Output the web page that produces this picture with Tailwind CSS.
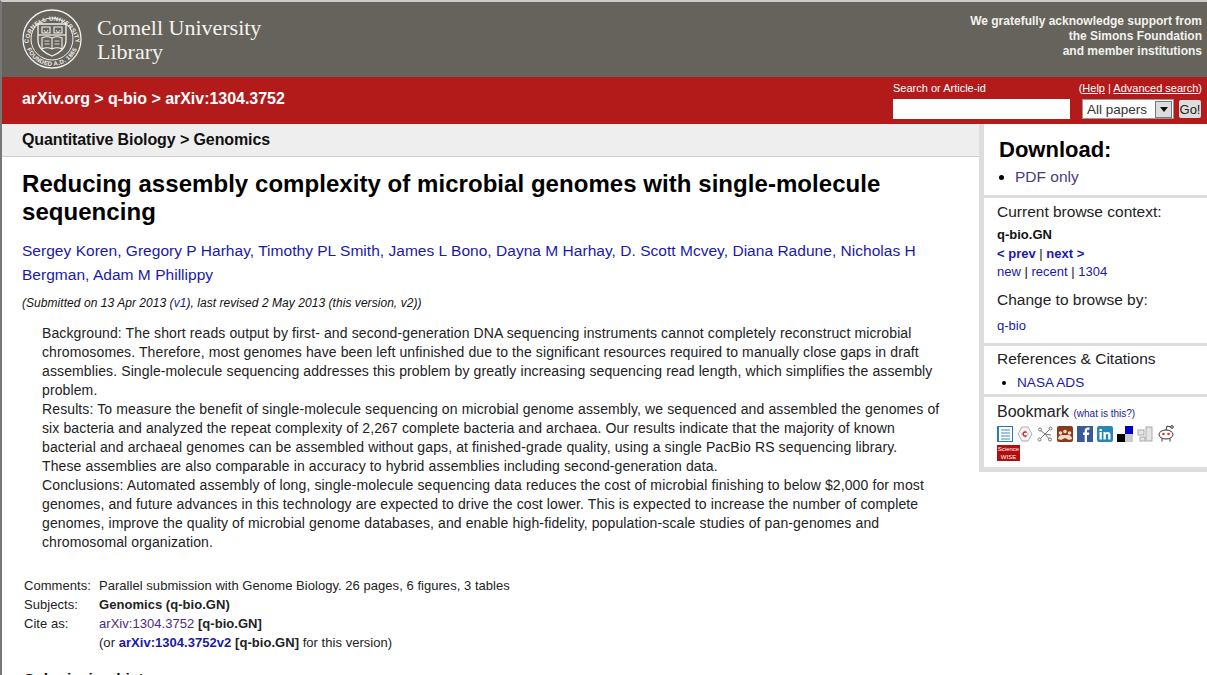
<!DOCTYPE html>
<html>
<head>
<meta charset="utf-8">
<script src="https://cdn.jsdelivr.net/npm/@tailwindcss/browser@4"></script>
</head>
<body class="bg-white overflow-hidden font-['Liberation_Sans',Arial,sans-serif] text-[#111]">
<div class="w-[1207px] h-[675px] overflow-hidden border-l-2 border-l-[#777] border-t-2 border-t-[#ccc] flex flex-col">
  <header class="h-[75px] shrink-0 bg-[#66635c] flex justify-between">
    <div class="flex items-start pl-[20px] pt-[7px] gap-[15px]">
      <svg class="w-[60px] h-[60px]" viewBox="0 0 60 60" fill="none" stroke="#f2f1ec">
        <defs>
          <path id="seal-top" d="M6.500 33A23.600 23.600 0 0 1 53.500 33"/>
          <path id="seal-bot" d="M3.200 33A27 27 0 0 0 56.800 33"/>
        </defs>
        <circle cx="30" cy="30" r="29" stroke-width="1.300"/>
        <circle cx="30" cy="30" r="21" stroke-width="1"/>
        <text font-family="Liberation Sans, sans-serif" font-size="6" font-weight="700" fill="#f2f1ec" stroke="none" letter-spacing="0.3"><textPath href="#seal-top" startOffset="50%" text-anchor="middle">CORNELL UNIVERSITY</textPath></text>
        <text font-family="Liberation Sans, sans-serif" font-size="6" font-weight="700" fill="#f2f1ec" stroke="none" letter-spacing="0.3"><textPath href="#seal-bot" startOffset="50%" text-anchor="middle">FOUNDED A.D. 1865</textPath></text>
        <path d="M16 15h28v16c0 9-7 13-14 16c-7-3-14-7-14-16z" stroke-width="1.300"/>
        <path d="M16 26h28" stroke-width="1.200"/>
        <path d="M20 18h8v6h-8zM32 18h8v6h-8z" stroke-width="1.100"/>
        <path d="M22 21l2 3 2-3M34 21l2 3 2-3" stroke-width=".9"/>
        <path d="M20 29c3-1.500 7-1.500 10 0c3-1.500 7-1.500 10 0v11c-3-1.500-7-1.500-10 0c-3-1.500-7-1.500-10 0zM30 29v11" stroke-width="1.100"/>
        <path d="M22.500 32h5M22.500 35h5M32.500 32h5M32.500 35h5" stroke-width=".8"/>
      </svg>
      <div class="font-['Liberation_Serif',serif] text-[#f4f3ee] text-[22px] leading-[24px] pt-[7px]">Cornell University<br>Library</div>
    </div>
    <div class="text-right text-[12px] font-bold leading-[15px] text-[#f2f2ee] pr-[5px] pt-[12px]">We gratefully acknowledge support from<br>the Simons Foundation<br>and member institutions</div>
  </header>
  <div class="h-[47px] shrink-0 bg-[#b31b1b] flex justify-between text-white">
    <div class="pl-[20px] pt-[13px] text-[16px] leading-[18px] font-bold tracking-[-0.03px]">arXiv.org &gt; q-bio &gt; arXiv:1304.3752</div>
    <div class="w-[314px] pr-[5px] pt-[5px] text-[11px] leading-[13px]">
      <div class="flex justify-between"><span>Search or Article-id</span><span>(<u>Help</u> | <u>Advanced search</u>)</span></div>
      <div class="flex items-center mt-[4px]">
        <div class="w-[177px] h-[20px] bg-white"></div>
        <div class="ml-[12px] w-[92px] h-[20px] bg-white border border-[#999] flex items-center justify-between text-[#333] text-[13.500px] pl-[4px] pr-[1px]">All papers
          <span class="w-[17px] h-[17px] bg-[#ddd] border border-[#777] flex items-center justify-center"><svg class="w-[8px] h-[5px]" viewBox="0 0 8 5"><path d="M0 0h8L4 5z" fill="#111"/></svg></span>
        </div>
        <div class="ml-[5px] w-[22px] h-[18px] bg-[#ddd] rounded-[2px] text-[#222] text-[13px] flex items-center justify-center">Go!</div>
      </div>
    </div>
  </div>
  <div class="flex flex-1 min-h-0">
    <main class="flex-1 min-w-0">
      <div class="h-[33px] bg-[#eeeeee] border-b border-[#ccc] pl-[20px] pt-[7px] text-[16px] leading-[18px] font-bold tracking-[-0.1px]">Quantitative Biology &gt; Genomics</div>
      <h1 class="pl-[20px] pr-[40px] pt-[13px] text-[24px] leading-[28px] font-bold tracking-[0.05px] text-black">Reducing assembly complexity of microbial genomes with single-molecule sequencing</h1>
      <div class="pl-[20px] pr-[40px] mt-[13px] text-[15.500px] leading-[24px] text-[#1a1aaa] tracking-[0.03px]">Sergey Koren, Gregory P Harhay, Timothy PL Smith, James L Bono, Dayna M Harhay, D. Scott Mcvey, Diana Radune, Nicholas H Bergman, Adam M Phillippy</div>
      <div class="pl-[20px] mt-[8px] text-[12px] leading-[16px] italic tracking-[0.05px]">(Submitted on 13 Apr 2013 (<span class="text-[#1a1aaa]">v1</span>), last revised 2 May 2013 (this version, v2))</div>
      <div class="pl-[40px] pr-[35px] mt-[13px] text-[14px] leading-[19px] text-[#222] tracking-[0.115px]">
        <div>Background: The short reads output by first- and second-generation DNA sequencing instruments cannot completely reconstruct microbial chromosomes. Therefore, most genomes have been left unfinished due to the significant resources required to manually close gaps in draft assemblies. Single-molecule sequencing addresses this problem by greatly increasing sequencing read length, which simplifies the assembly problem.</div>
        <div>Results: To measure the benefit of single-molecule sequencing on microbial genome assembly, we sequenced and assembled the genomes of six bacteria and analyzed the repeat complexity of 2,267 complete bacteria and archaea. Our results indicate that the majority of known bacterial and archaeal genomes can be assembled without gaps, at finished-grade quality, using a single PacBio RS sequencing library.<br>These assemblies are also comparable in accuracy to hybrid assemblies including second-generation data.</div>
        <div>Conclusions: Automated assembly of long, single-molecule sequencing data reduces the cost of microbial finishing to below $2,000 for most genomes, and future advances in this technology are expected to drive the cost lower. This is expected to increase the number of complete genomes, improve the quality of microbial genome databases, and enable high-fidelity, population-scale studies of pan-genomes and chromosomal organization.</div>
      </div>
      <div class="pl-[22px] mt-[24px] grid grid-cols-[75px_1fr] text-[13px] leading-[19px] text-[#222] tracking-[0.04px]">
        <div>Comments:</div><div>Parallel submission with Genome Biology. 26 pages, 6 figures, 3 tables</div>
        <div>Subjects:</div><div class="font-bold">Genomics (q-bio.GN)</div>
        <div>Cite as:</div><div><span class="text-[#4b2c83]">arXiv:1304.3752</span> <b>[q-bio.GN]</b></div>
        <div></div><div>(or <b class="text-[#1a1aaa]">arXiv:1304.3752v2</b> <b>[q-bio.GN]</b> for this version)</div>
      </div>
      <div class="pl-[22px] mt-[18px] text-[15.500px] leading-[18px] font-bold">Submission history</div>
    </main>
    <aside class="w-[228px] shrink-0 self-start bg-[#dddddd] pl-[5px] pb-[5px]">
      <div class="bg-white h-[71px] pl-[15px] pt-[13px]">
        <div class="text-[22px] leading-[26px] font-bold text-black">Download:</div>
        <ul class="mt-[4px] text-[15.500px] leading-[20px] text-[#4b3b7c]"><li class="list-disc ml-[16px] marker:text-black">PDF only</li></ul>
      </div>
      <div class="bg-white mt-[3px] h-[145px] pl-[13px] pt-[5px] text-[13px] leading-[18px]">
        <div class="text-[15.500px] text-[#222]">Current browse context:</div>
        <div class="mt-[5px] font-bold">q-bio.GN</div>
        <div class="mt-[1px] font-bold text-[#1a1aaa]">&lt; prev <span class="text-[#111] font-normal">|</span> next &gt;</div>
        <div class="text-[#1a1aaa]">new <span class="text-[#111]">|</span> recent <span class="text-[#111]">|</span> 1304</div>
        <div class="mt-[10px] text-[15.500px] text-[#222]">Change to browse by:</div>
        <div class="mt-[8px] text-[#1a1aaa]">q-bio</div>
      </div>
      <div class="bg-white mt-[3px] h-[48px] pl-[13px] pt-[4px]">
        <div class="text-[15.500px] leading-[18px] text-[#222]">References &amp; Citations</div>
        <ul class="mt-[7px] text-[13.600px] leading-[16px] text-[#1a1aaa]"><li class="list-disc ml-[20px] marker:text-black">NASA ADS</li></ul>
      </div>
      <div class="bg-white mt-[3px] h-[70px] pl-[13px] pt-[6px]">
        <div class="text-[16px] leading-[18px] text-[#222]">Bookmark <span class="text-[10px] text-[#1a1aaa]">(what is this?)</span></div>
        <div class="mt-[3px] flex items-center gap-[4px] h-[16px]">
          <svg class="w-[16px] h-[16px]" viewBox="0 0 16 16"><rect x=".5" y=".5" width="15" height="15" fill="#fff" stroke="#2a78b5"/><path d="M1 0v16" stroke="#2a78b5" stroke-width="2"/><path d="M4 4h9M4 7h9M4 10h9M4 13h9" stroke="#3d8cc4" stroke-width="1.200"/></svg>
          <svg class="w-[16px] h-[16px]" viewBox="0 0 16 16"><path d="M5 1h6l4 7-4 7H5L1 8z" fill="#f4f4f4" stroke="#aab"/><path d="M8 4.500l3.500 3.500L8 11.500 4.500 8z" fill="#fff" stroke="#bbb"/><path d="M9.500 6.500a2 2 0 1 0 0 3" fill="none" stroke="#c22" stroke-width="1.400"/></svg>
          <svg class="w-[16px] h-[16px]" viewBox="0 0 16 16" fill="#fff" stroke="#777"><path d="M2 14L8 8l6-6M3 4l5 4 5 6M8 8l6 1" stroke-width="1"/><circle cx="2.500" cy="13.500" r="1.500"/><circle cx="13.500" cy="2.500" r="1.500"/><circle cx="3" cy="3.500" r="1.500"/><circle cx="13" cy="13.500" r="1.500"/></svg>
          <svg class="w-[16px] h-[16px]" viewBox="0 0 16 16"><rect width="16" height="16" rx="2" fill="#8a3a1c"/><circle cx="3.500" cy="7" r="1.800" fill="#f3dcc5"/><circle cx="8" cy="5.500" r="1.800" fill="#f3dcc5"/><circle cx="12.500" cy="7" r="1.800" fill="#f3dcc5"/><path d="M1 13c0-4 4-4 4-4s1 0 3 0 3 0 3 0 4 0 4 4l-3 1-4-2-4 2z" fill="#f3dcc5"/></svg>
          <svg class="w-[16px] h-[16px]" viewBox="0 0 16 16"><rect width="16" height="16" fill="#3b5998"/><path d="M10 16V9h2l.4-2.500H10V5c0-.8.300-1.200 1.300-1.200h1.200V1.500H11C8.800 1.500 7.700 2.800 7.700 4.800v1.700H6V9h1.700v7z" fill="#fff"/></svg>
          <svg class="w-[16px] h-[16px]" viewBox="0 0 16 16"><rect width="16" height="16" rx="2" fill="#2b86b8"/><path d="M2.500 6h2.300v7.500H2.500zM2.500 3h2.300v2H2.500zM6.500 6h2.200v1c1-1.600 4.800-1.800 4.800 1.800v4.700h-2.300V9.500c0-2-2.400-1.800-2.400 0v4H6.500z" fill="#fff"/></svg>
          <svg class="w-[16px] h-[16px]" viewBox="0 0 16 16"><rect x="8" width="8" height="8" fill="#0000c8"/><rect y="8" width="8" height="8" fill="#000"/><rect x="8" y="8" width="8" height="8" fill="#ccc"/></svg>
          <svg class="w-[16px] h-[16px]" viewBox="0 0 16 16" fill="#e4e4e4" stroke="#aaa"><rect x="9" y="1" width="6" height="14"/><rect x="1" y="4" width="6" height="5"/><rect x="3" y="11" width="5" height="4"/></svg>
          <svg class="w-[18px] h-[18px] -mt-[2px]" viewBox="0 0 18 18" fill="#fff" stroke="#333"><ellipse cx="9" cy="10.500" rx="7" ry="4.500"/><circle cx="6.500" cy="10" r="1.300" fill="#e33" stroke="none"/><circle cx="11.500" cy="10" r="1.300" fill="#e33" stroke="none"/><path d="M9 6l1-4 4 1M5 14.500v3M13 14.500v3" fill="none"/><circle cx="15" cy="3" r="1.300"/></svg>
        </div>
        <div class="mt-[3px] w-[23px] h-[16px] bg-[#b40d0d] text-white text-[6px] leading-[8px] text-center">Science<br>WISE</div>
      </div>
    </aside>
  </div>
</div>
</body>
</html>
